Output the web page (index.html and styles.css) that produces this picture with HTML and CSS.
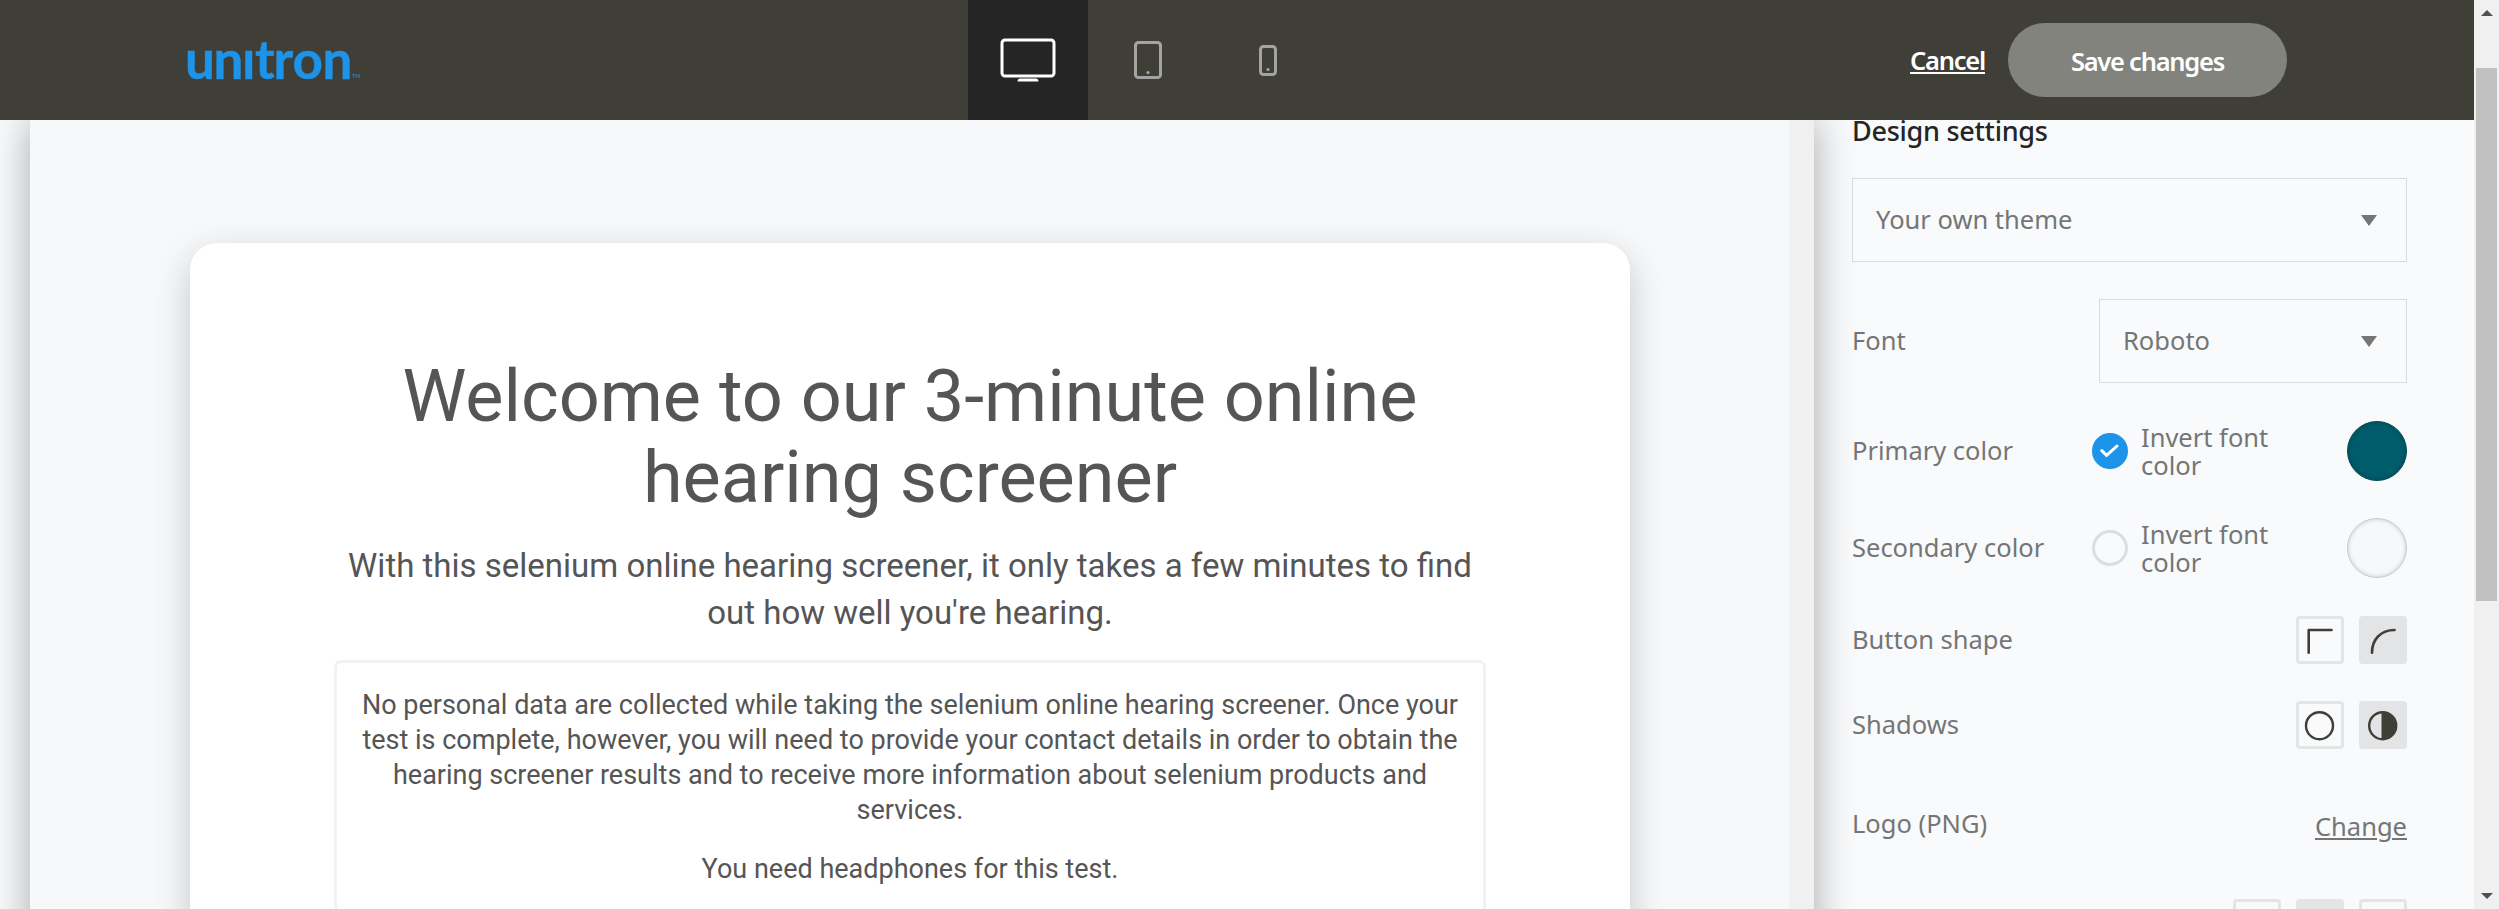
FILE: index.html
```html
<!DOCTYPE html>
<html lang="en">
<head>
<meta charset="utf-8">
<title>Design settings</title>
<link rel="stylesheet" href="styles.css">
</head>
<body>
<div class="app">
  <div class="page">
    <header class="header">
      <svg class="logo" width="180" height="60" viewBox="0 0 180 60">
        <text class="logo-word" x="-1 27.500 56 69 87.500 106.500 136.500" y="48.500">unıtron</text>
        <text class="logo-tm" x="166" y="48">TM</text>
      </svg>
      <nav class="devices">
        <button class="device device-active" aria-label="Desktop">
          <svg width="56" height="46" viewBox="0 0 56 46"><rect x="2" y="3" width="52" height="36" rx="3" fill="none" stroke="#fff" stroke-width="3"/><path d="M17.500 44.500q0-3 3-3h15q3 0 3 3z" fill="#fff"/></svg>
        </button>
        <button class="device" aria-label="Tablet">
          <svg width="28" height="38" viewBox="0 0 28 38"><rect x="1.500" y="1.500" width="25" height="35" rx="3" fill="none" stroke="#a3a3a1" stroke-width="3"/><circle cx="14" cy="31.500" r="1.600" fill="#a3a3a1"/></svg>
        </button>
        <button class="device" aria-label="Phone">
          <svg width="18" height="31" viewBox="0 0 18 31"><rect x="1.500" y="1.500" width="15" height="28" rx="3" fill="none" stroke="#a3a3a1" stroke-width="3"/><circle cx="9" cy="24.500" r="1.600" fill="#a3a3a1"/></svg>
        </button>
      </nav>
      <div class="actions">
        <a class="cancel">Cancel</a>
        <button class="save">Save changes</button>
      </div>
    </header>
    <main class="workspace">
      <section class="preview">
        <div class="stage">
          <article class="card">
            <h1 class="card-title">Welcome to our 3-minute online<br>hearing screener</h1>
            <p class="card-lead">With this selenium online hearing screener, it only takes a few minutes to find<br>out how well you're hearing.</p>
            <div class="notice">
              <p>No personal data are collected while taking the selenium online hearing screener. Once your<br>test is complete, however, you will need to provide your contact details in order to obtain the<br>hearing screener results and to receive more information about selenium products and<br>services.</p>
              <p>You need headphones for this test.</p>
            </div>
          </article>
        </div>
        <div class="preview-track"></div>
      </section>
      <aside class="panel">
        <h2 class="panel-title">Design settings</h2>
        <div class="select"><span class="label">Your own theme</span><svg width="16" height="11" viewBox="0 0 16 11"><path d="M0 0h16L8 11z" fill="#757575"/></svg></div>
        <div class="row row-font"><span class="label">Font</span><div class="select select-font"><span class="label">Roboto</span><svg width="16" height="11" viewBox="0 0 16 11"><path d="M0 0h16L8 11z" fill="#757575"/></svg></div></div>
        <div class="row row-color"><span class="label">Primary color</span>
          <span class="check check-on"><svg width="20" height="16" viewBox="0 0 20 16"><path d="M1.800 7.600L6.600 12.400 17 3" fill="none" stroke="#fff" stroke-width="3" stroke-linecap="round" stroke-linejoin="round"/></svg></span>
          <span class="invert"><span>Invert font</span><span>color</span></span><span class="swatch swatch-primary"></span></div>
        <div class="row row-color row-secondary"><span class="label">Secondary color</span>
          <span class="check"></span>
          <span class="invert"><span>Invert font</span><span>color</span></span><span class="swatch"></span></div>
        <div class="row row-options"><span class="label">Button shape</span>
          <div class="options">
            <span class="option"><svg width="42" height="42" viewBox="0 0 42 42"><path d="M9.700 33.700V11h22.800" fill="none" stroke="#403f37" stroke-width="2.600" stroke-linejoin="round" stroke-linecap="round"/></svg></span>
            <span class="option option-on"><svg width="42" height="42" viewBox="0 0 42 42"><path d="M10 33.700C10 20 19 11 32.500 11" fill="none" stroke="#403f37" stroke-width="2.600" stroke-linecap="round"/></svg></span>
          </div></div>
        <div class="row row-options row-shadows"><span class="label">Shadows</span>
          <div class="options">
            <span class="option"><svg width="42" height="42" viewBox="0 0 42 42"><circle cx="20.500" cy="21.700" r="13.500" fill="none" stroke="#403f37" stroke-width="2.400"/></svg></span>
            <span class="option option-on"><svg width="42" height="42" viewBox="0 0 42 42"><circle cx="20.700" cy="21.700" r="13.500" fill="none" stroke="#403f37" stroke-width="2.400"/><path d="M19.500 8.200h1.200a13.500 13.500 0 0 1 0 27h-1.200z" fill="#403f37"/></svg></span>
          </div></div>
        <div class="row row-logo"><span class="label">Logo (PNG)</span><a class="change">Change</a></div>
        <div class="row row-options row-last"><div class="options"><span class="option"></span><span class="option option-on"></span><span class="option"></span></div></div>
      </aside>
    </main>
  </div>
  <div class="scrollbar">
    <svg class="scroll-arrow" width="12" height="6" viewBox="0 0 12 6"><path d="M0 6L6 0l6 6z" fill="#505050"/></svg>
    <div class="thumb"></div>
    <svg class="scroll-arrow" width="12" height="6" viewBox="0 0 12 6"><path d="M0 0h12L6 6z" fill="#505050"/></svg>
  </div>
</div>
</body>
</html>
```
FILE: styles.css
```css
* { box-sizing: border-box; }
body { margin: 0; font-family: "Noto Sans", sans-serif; font-size: 25.5px; color: #757575; overflow: hidden; }
h1, h2, p { margin: 0; font-weight: 400; }
button { border: 0; padding: 0; font: inherit; }
svg { display: block; }

.app { display: flex; width: 2499px; height: 909px; overflow: hidden; }
.page { display: flex; flex-direction: column; width: 2474px; }

.header { position: relative; z-index: 2; flex: none; display: grid; grid-template-columns: 968px 360px 1fr; align-items: center; height: 120px; background: #403f37; }
.logo { margin-left: 186px; overflow: visible; }
.logo-word { font-family: Lato, sans-serif; font-weight: 700; font-size: 53px; fill: #1d94e9; stroke: #1d94e9; stroke-width: 0.4px; }
.logo-tm { font-family: Lato, sans-serif; font-size: 5.5px; fill: #1d94e9; }
.devices { display: flex; height: 120px; }
.device { display: flex; align-items: center; justify-content: center; width: 120px; background: none; }
.device-active { background: #252525; }
.actions { display: flex; align-items: center; justify-content: flex-end; gap: 23px; margin-right: 187px; color: #fff; font-weight: 600; letter-spacing: -1.25px; }
.cancel { text-decoration: underline; text-decoration-thickness: 2px; text-underline-offset: 2px; }
.save { width: 279px; height: 74px; padding-top: 1px; border-radius: 37px; background: #82837d; color: #fff; letter-spacing: -1.25px; }

.workspace { display: flex; flex: 1; min-height: 0; padding-left: 30px; background: #f8fafc; }
.preview { position: relative; display: flex; flex: none; width: 1784px; height: 860px; background: #f6f8fa; box-shadow: 0 0 38px rgba(0, 0, 0, 0.33); }
.stage { display: flex; width: 1759px; padding: 123px 159px 0 160px; overflow: hidden; }
.preview-track { width: 25px; background: #f0f0f0; }
.card { width: 1440px; height: 900px; padding: 113px 144px 0; border-radius: 27px; background: #fff; box-shadow: 0 12px 36px rgba(0, 0, 0, 0.2); color: #555; font-family: Roboto, sans-serif; text-align: center; white-space: nowrap; }
.card-title { font-size: 72px; line-height: 81px; }
.card-lead { margin-top: 24px; font-size: 33px; line-height: 47px; }
.notice { height: 253px; margin-top: 24px; padding: 25px 0 0; border: 3px solid #f2f2f2; border-radius: 7px; font-size: 27px; line-height: 35px; }
.notice p + p { margin-top: 24px; }

.panel { display: flex; flex-direction: column; width: 593px; margin-left: auto; margin-right: 67px; white-space: nowrap; padding-left: 38px; }
.panel-title { flex: none; height: 58px; line-height: 22px; color: #252525; font-size: 27px; font-weight: 500; letter-spacing: -0.27px; }
.select { flex: none; display: flex; align-items: center; justify-content: space-between; height: 84px; padding: 0 29px 0 23px; border: 1px solid #d9dcdf; }
.row { flex: none; display: flex; align-items: center; justify-content: space-between; }
.label { padding-bottom: 2px; }
.row-font { margin-top: 37px; }
.select-font { width: 308px; }
.row-color { display: grid; grid-template-columns: 240px 49px 1fr 60px; height: 60px; margin-top: 38px; }
.row-secondary { margin-top: 37px; }
.check { display: flex; align-items: center; justify-content: center; width: 36px; height: 36px; border: 3px solid #d9dee2; border-radius: 50%; }
.check-on { border-color: #1d94e9; background: #1d94e9; }
.invert { display: flex; flex-direction: column; line-height: 28px; }
.swatch { width: 60px; height: 60px; border-radius: 50%; border: 1px solid #c6c7c8; background: #f7f8f9; box-shadow: inset 0 0 4px rgba(0, 0, 0, 0.2); }
.swatch-primary { border-color: #034955; background: #005b6a; }
.row-options { height: 48px; margin-top: 38px; }
.row-shadows { margin-top: 37px; }
.options { display: flex; gap: 15px; margin-left: auto; }
.option { width: 48px; height: 48px; border: 3px solid #e2e4e5; border-radius: 4px; }
.option-on { background: #e2e4e5; }
.row-logo { height: 76px; margin-top: 37px; }
.change { padding-top: 4px; text-decoration: underline; text-decoration-thickness: 2px; text-underline-offset: 2px; }
.row-last { margin-top: 37px; }

.scrollbar { display: flex; flex-direction: column; align-items: center; justify-content: space-between; width: 25px; padding: 10px 0 10px; background: #f0f0f0; }
.thumb { width: 21px; height: 533px; margin-top: 52px; margin-bottom: auto; background: #c1c1c1; }
```
